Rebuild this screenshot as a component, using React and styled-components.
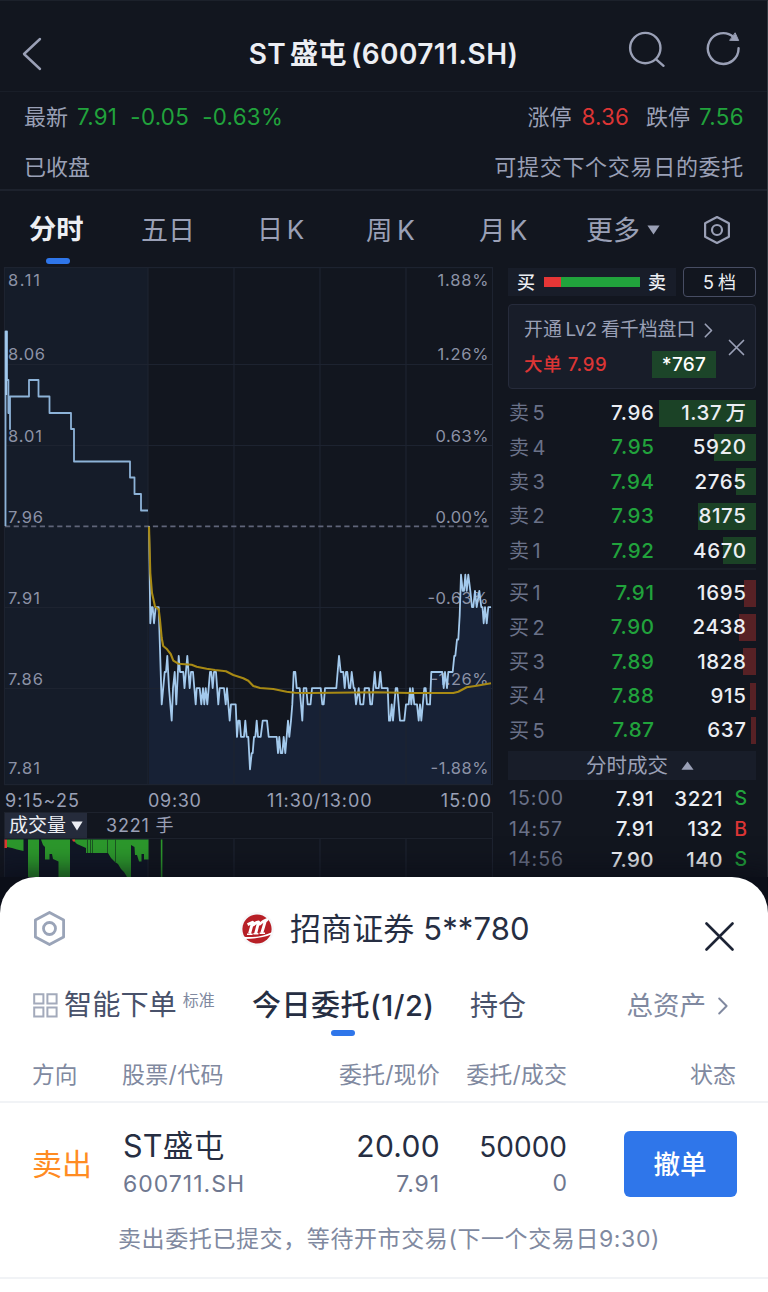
import React from "react";
import styled, { createGlobalStyle, css } from "styled-components";

const Global = createGlobalStyle`
  *, *::before, *::after { box-sizing: border-box; }
  body { margin: 0; background: #12161f; }
`;

const C = {
  bg: "#12161f",
  panel: "#181d29",
  line: "#1d222d",
  muted: "#9aa0b6",
  dim: "#6a7188",
  green: "#21a33c",
  red: "#dc3535",
  white: "#eceef3",
  ink: "#262e42",
  slate: "#8089a0",
  blue: "#2f76ea",
};

const type = css`
  font-size: ${(p) => p.$size}px;
  font-weight: ${(p) => p.$weight || 400};
  letter-spacing: ${(p) => p.$track || 0}px;
  word-spacing: ${(p) => p.$words || 0}px;
  color: ${(p) => p.$color || "inherit"};
  white-space: pre;
`;

const Screen = styled.div`
  width: 768px;
  height: 1292px;
  overflow: hidden;
  display: flex;
  flex-direction: column;
  background: ${C.bg};
  font-family: Inter, "Noto Sans CJK SC", sans-serif;
  line-height: 1;
`;

const Quotes = styled.div`
  height: 877px;
  flex: none;
  border-top: 1px solid #1c212b;
  border-right: 1px solid #343a42;
`;

const TopBar = styled.header`
  height: 91px;
  padding: 15px 26px 0 22px;
  display: grid;
  grid-template-columns: 120px 1fr 120px;
  align-items: center;
  border-bottom: 1px solid #191e28;
  color: ${C.muted};
`;

const Title = styled.h1`
  margin: 0 0 0 4px;
  text-align: center;
  ${type}
`;

const TopActions = styled.div`
  display: flex;
  gap: 40px;
  margin-top: -9px;
  margin-left: 7px;
`;

const Quote = styled.section`
  height: 99px;
  padding: 0 23px 0 24px;
  border-bottom: 2px solid ${C.line};
  color: ${C.muted};
`;

const QuoteLine = styled.div`
  height: 50px;
  display: flex;
  align-items: center;
  justify-content: space-between;
`;

const Figures = styled.div`
  display: flex;
  gap: ${(p) => p.$gap}px;
`;

const Label = styled.span`
  ${type}
`;

const PeriodTabs = styled.nav`
  height: 76px;
  display: flex;
  align-items: center;
  padding-left: 29px;
  color: ${C.muted};
`;

const PeriodTab = styled.div`
  width: ${(p) => p.$width}px;
  height: 76px;
  padding-top: 2px;
  display: flex;
  align-items: center;
  gap: 7px;
  position: relative;
`;

const Underline = styled.i`
  position: absolute;
  left: ${(p) => p.$left}px;
  bottom: ${(p) => p.$bottom}px;
  width: 24px;
  height: 6px;
  border-radius: 3px;
  background: ${C.blue};
`;

const HexSlot = styled.div`
  padding-top: 2px;
  display: flex;
`;

const Market = styled.main`
  height: 610px;
  display: flex;
`;

const ChartColumn = styled.section`
  width: 508px;
  height: 610px;
`;

const Axis = styled.div`
  height: 26px;
  width: 492px;
  padding: 3px 0 0 5px;
  display: grid;
  grid-template-columns: 143px 119px 1fr auto;
  align-items: center;
  color: ${C.muted};
`;

const VolumeHead = styled.div`
  height: 27px;
  width: 489px;
  margin-left: 4px;
  display: flex;
  align-items: center;
  border: 1px solid ${C.line};
  color: ${C.muted};
`;

const VolumePick = styled.div`
  width: 82px;
  height: 25px;
  margin-right: 19px;
  padding-left: 4px;
  display: flex;
  align-items: center;
  gap: 5px;
  background: #252b3b;
  color: ${C.white};
`;

const Book = styled.aside`
  width: 248px;
  display: flex;
  flex-direction: column;
  color: ${C.white};
`;

const BookHead = styled.div`
  height: 30px;
  display: flex;
  justify-content: space-between;
  align-items: center;
`;

const Ratio = styled.div`
  width: 168px;
  height: 28px;
  display: flex;
  align-items: center;
  justify-content: space-between;
  padding: 2px 10px 0 9px;
  background: ${C.panel};
`;

const RatioBar = styled.div`
  width: 96px;
  height: 10px;
  margin-top: -2px;
  background: linear-gradient(90deg, #e63636 17px, ${C.green} 17px);
`;

const DepthButton = styled.button`
  width: 73px;
  height: 30px;
  padding: 2px 0 0;
  border: 1.5px solid #474d63;
  border-radius: 4px;
  background: transparent;
  font-family: inherit;
  line-height: 1;
  ${type}
`;

const Promo = styled.div`
  height: 85px;
  margin-top: 7px;
  padding: 11px 10px 10px 15px;
  display: flex;
  justify-content: space-between;
  align-items: center;
  border: 1px solid #262b3b;
  border-radius: 4px;
  background: ${C.panel};
  color: ${C.muted};
`;

const PromoBody = styled.div`
  width: 192px;
  display: flex;
  flex-direction: column;
  gap: 7px;
`;

const PromoLine = styled.div`
  height: 27px;
  padding-right: ${(p) => p.$inset || 0}px;
  display: flex;
  align-items: center;
  justify-content: space-between;
`;

const Lots = styled.div`
  width: 64px;
  height: 27px;
  display: flex;
  align-items: center;
  justify-content: center;
  background: #1c4529;
  color: #fff;
`;

const Levels = styled.div`
  padding-top: ${(p) => p.$top}px;
  border-top: ${(p) => (p.$ruled ? "2px solid #191e28" : "0")};
`;

const Level = styled.div`
  height: 34.4px;
  padding: 0 9.5px 0 1px;
  display: grid;
  grid-template-columns: 45px 100.5px 1fr;
  align-items: center;
  position: relative;
  z-index: 0;
  & > span:not(:first-child) { text-align: right; }
`;

const DepthBar = styled.i`
  position: absolute;
  z-index: -1;
  right: 0;
  top: 3.7px;
  height: 27px;
  width: ${(p) => p.$width}px;
  background: ${(p) => p.$color};
`;

const TradesHead = styled.div`
  height: 29px;
  margin-top: 3px;
  padding: 1px 0 0 16px;
  display: flex;
  align-items: center;
  justify-content: center;
  gap: 13px;
  background: ${C.panel};
  color: ${C.muted};
`;

const Trades = styled.div`
  padding-top: 4px;
`;

const Trade = styled.div`
  height: 30.5px;
  padding: 0 9px 0 1px;
  display: grid;
  grid-template-columns: 65px 80px 69px 1fr;
  align-items: center;
  & > :nth-child(n + 2) { text-align: right; }
`;

const Sheet = styled.section`
  height: 415px;
  flex: none;
  position: relative;
  border-radius: 36px 36px 0 0;
  background: #fff;
  color: ${C.ink};
`;

const Backdrop = styled.div`
  background: #0b0e18;
  box-shadow: 0 -4px 22px 4px rgba(8, 10, 20, 0.6);
  position: relative;
`;

const SheetHead = styled.div`
  height: 105px;
  padding: 0 34px 2px 34px;
  display: grid;
  grid-template-columns: 206px 1fr 29px;
  align-items: center;
`;

const Broker = styled.div`
  display: flex;
  align-items: center;
  gap: 16px;
`;

const CloseWrap = styled.div`
  padding-top: 18px;
`;

const SheetTabs = styled.nav`
  height: 60px;
  padding: 0 40px 13px 33px;
  display: flex;
  align-items: center;
`;

const SheetTab = styled.div`
  display: flex;
  align-items: center;
  gap: ${(p) => p.$gap || 0}px;
  width: ${(p) => (p.$width ? p.$width + "px" : "auto")};
  height: 48px;
  position: relative;
`;

const Sup = styled.sup`
  align-self: flex-start;
  margin-top: 10px;
  line-height: 1;
  ${type}
`;

const Assets = styled.div`
  margin-left: auto;
  display: flex;
  align-items: center;
  gap: 12px;
  color: ${C.slate};
`;

const ColumnHead = styled.div`
  height: 61px;
  padding: 7px 32px 0;
  display: grid;
  grid-template-columns: 90px 217px 100px 128px 1fr;
  align-items: center;
  color: ${C.slate};
  border-bottom: 2px solid #f1f3f6;
  & > :nth-child(n + 3) { text-align: right; }
`;

const Order = styled.article`
  height: 176px;
  padding: 27px 31px 0 32px;
  border-bottom: 2px solid #f1f3f6;
`;

const OrderGrid = styled.div`
  display: grid;
  grid-template-columns: 91px 187px 130px 127px 1fr;
  align-items: center;
`;

const Pair = styled.div`
  height: 68px;
  display: flex;
  flex-direction: column;
  justify-content: space-between;
  padding: ${(p) => p.$pad || "1px 0 2px"};
  align-items: ${(p) => (p.$end ? "flex-end" : "flex-start")};
`;

const CancelButton = styled.button`
  justify-self: end;
  width: 113px;
  height: 66px;
  padding: 0 1px 4px 0;
  border: 0;
  border-radius: 6px;
  background: ${C.blue};
  font-family: inherit;
  ${type}
`;

const Note = styled.p`
  margin: 30px 0 0 86px;
  line-height: 1;
  ${type}
`;

const BackIcon = () => (
  <svg width="20" height="34" viewBox="0 0 20 34" fill="none" stroke="#9aa0b6" strokeWidth="2.4" strokeLinecap="round" strokeLinejoin="round">
    <path d="M18 2 2 17l16 15" />
  </svg>
);

const SearchIcon = () => (
  <svg width="40" height="38" viewBox="0 0 40 38" fill="none" stroke="#9aa0b6" strokeWidth="2.5" strokeLinecap="round">
    <circle cx="18" cy="18" r="15.8" />
    <path d="m29 29.5 8 7" />
  </svg>
);

const RefreshIcon = () => (
  <svg width="36" height="38" viewBox="0 0 36 38" fill="none" stroke="#9aa0b6" strokeWidth="2.5" strokeLinecap="round">
    <path d="M33.9 18.2A16 16 0 1 1 28.5 6.5" />
    <path d="M30.5 2.5 34 10.2 25 10Z" fill="#9aa0b6" strokeWidth="1" strokeLinejoin="round" />
  </svg>
);

const HexIcon = ({ width, height, color, stroke, hole }) => (
  <svg width={width} height={height} viewBox={`0 0 ${width} ${height}`} fill="none" stroke={color} strokeWidth={stroke} strokeLinejoin="round">
    <path
      d={`M${width / 2} ${stroke / 2} L${width - stroke / 2} ${height * 0.26} V${height * 0.74} L${width / 2} ${height - stroke / 2} L${stroke / 2} ${height * 0.74} V${height * 0.26} Z`}
    />
    <circle cx={width / 2} cy={height / 2} r={hole} />
  </svg>
);

const Triangle = ({ width, height, up, color }) => (
  <svg width={width} height={height} viewBox="0 0 12 10" preserveAspectRatio="none">
    <path d={up ? "M.4 9.6 6 .6l5.6 9Z" : "M.4.4h11.2L6 9.4Z"} fill={color} />
  </svg>
);

const Chevron = ({ width, height, color, stroke }) => (
  <svg width={width} height={height} viewBox="0 0 10 18" fill="none" stroke={color} strokeWidth={stroke} strokeLinecap="round" strokeLinejoin="round">
    <path d="m1.2 1.5 7.4 7.5-7.4 7.5" />
  </svg>
);

const Cross = ({ size, color, stroke }) => (
  <svg width={size} height={size} viewBox={`0 0 ${size} ${size}`} stroke={color} strokeWidth={stroke} strokeLinecap="round">
    <path d={`M1.5 1.5 ${size - 1.5} ${size - 1.5}M${size - 1.5} 1.5 1.5 ${size - 1.5}`} />
  </svg>
);

const GridIcon = () => (
  <svg width="25" height="25" viewBox="0 0 25 25" fill="none" stroke="#a3aabb" strokeWidth="2">
    <path d="M1.2 1.2h9.2v9.2H1.2zM14.4 1.2h9.2v9.2h-9.2zM1.2 14.4h9.2v9.2H1.2zM14.4 14.4h9.2v9.2h-9.2z" />
  </svg>
);

const BrokerLogo = () => (
  <svg width="34" height="34" viewBox="0 0 34 34">
    <circle cx="17" cy="17" r="17" fill="#f7f8fa" />
    <circle cx="17" cy="17" r="14.6" fill="#b71f26" />
    <g fill="none" stroke="#fff" strokeLinejoin="round">
      <path strokeWidth="2.9" d="M7.6 12.6 12.6 10.3 9.6 21.5M12.6 13.4Q16.2 9.8 18.6 10L15.7 21.3M18.8 12.8Q22.5 9 27 7.6L25.3 9.2 21.8 20.8" />
      <path strokeWidth="1.5" d="M7 22.2h5.6M13.4 21.8h5M19.6 21.3h5.4" />
    </g>
    <path fill="#fff" d="M3 24.8C13 25.7 22 24.6 32 20.2L31.2 22.6C23 25.6 15 26.9 4.6 27Z" />
  </svg>
);

const levelY = (cents) => 526 + (796 - cents) * 16.22;

// Pairs of horizontal position and price in cents for the trading session.
const session = [
  149, 796, 150.3, 790, 151.7, 791, 152.7, 791, 154, 790, 155.7, 791, 158.7, 791, 161.7, 785, 164.7, 787, 166, 787,
  167.3, 788, 169, 786, 171.7, 784, 173, 786, 174.7, 787, 176.3, 785, 178.7, 788, 180, 787, 183.3, 787, 184.5, 786,
  187.3, 788, 189.7, 786, 191, 787, 193, 787, 195.7, 785, 196.7, 786, 199.7, 786, 201.3, 785, 203, 786, 204.3, 785,
  205.7, 786, 207.3, 785, 210, 787, 211.3, 787, 212.7, 786, 214, 787, 216, 787, 218.3, 785, 219.7, 786, 224, 786,
  225.7, 785, 227, 786, 229.7, 784, 231, 785, 235.7, 785, 237, 783, 238.3, 784, 239.7, 784, 241, 783, 244, 783,
  245.3, 784, 246.7, 783, 248.3, 783, 250, 781, 251.7, 782, 252.7, 782, 254, 783, 255.3, 783, 256.7, 784, 258, 783,
  260.7, 783, 262.7, 784, 267, 784, 268.7, 783, 276.7, 783, 278, 782, 279.3, 783, 280.7, 782, 282.3, 782, 283.7, 783,
  285.3, 782, 288, 784, 289.3, 783, 291, 784, 292.3, 785, 293.7, 787, 295.3, 787, 296.7, 786, 299.7, 786, 302.3, 784,
  303.7, 786, 306.3, 786, 307.7, 785, 310.5, 785, 312, 786, 320.7, 786, 322.3, 785, 323.7, 785, 325, 786, 336.3, 786,
  339, 788, 340.7, 787, 343.3, 787, 344.7, 786, 346, 787, 347.3, 787, 349, 786, 350.3, 786, 351.7, 787, 353.7, 786,
  354.7, 786, 356, 785, 358.7, 786, 360.3, 785, 363.3, 785, 364.7, 786, 369, 786, 370.3, 785, 372, 785, 374.7, 787,
  376, 786, 378.7, 786, 380.3, 787, 381.7, 786, 387.7, 786, 389, 784, 390.3, 784, 391.7, 785, 393, 784, 395.7, 786,
  397.3, 786, 400, 784, 404.3, 784, 406, 785, 408.7, 785, 410, 786, 411.3, 785, 412.7, 786, 414.3, 785, 417, 785,
  418.7, 784, 420, 785, 421.3, 784, 424.3, 786, 425.7, 786, 427, 785, 430, 785, 431.3, 787, 442.3, 787, 443.7, 786,
  445, 787, 447, 786, 448.3, 787, 452.7, 787, 454.3, 788, 455.3, 788, 457, 789, 458.3, 789, 459.7, 790.5, 461, 793,
  462.7, 792, 464, 792, 465.3, 793, 466.7, 792, 468.3, 793, 470.3, 792, 472, 791, 473.3, 791, 475, 792, 476.7, 791,
  479.3, 792, 481.3, 791, 482.5, 791, 483.7, 790, 485, 791, 486.7, 790, 488.3, 791, 491, 791,
];

const sessionPath = session.reduce(
  (d, v, i) => (i % 2 ? `${d} ${levelY(v).toFixed(1)}` : `${d}${i ? "L" : ""}${v}`),
  "M"
);

const average =
  "M149 526.5 150.3 573 152 593 155 606.5 158.7 609.5 160 620 161.7 638 163.2 646 166.5 648.7 170.7 654 173.3 660.7 178.3 663.7 191.7 664.7 196.7 666.7 206.7 668.7 215 670 226 671.3 233.3 675 243.3 678.3 248.3 680.7 253.3 686 260 688 273.3 689 286.7 691.7 295 692.7 310 693 376.7 692.3 410 693 453.3 693 458.3 691.7 466.7 687.3 476.7 685.7 491 683.3";

const auction =
  "M5.5 526V331.5H7V380H8.4V413H10V429V396.5H29V380H38.5V396.5H49.5V413H71V429H74V461.5H130V477.5H134.5V494H141V510.5H148";

const priceMarks = [
  ["8.11", 286, 32], ["8.06", 360, 37], ["8.01", 441.5, 34], ["7.96", 522.5, 35],
  ["7.91", 603.5, 32], ["7.86", 684.5, 35], ["7.81", 774, 32],
];

const percentMarks = [
  ["1.88%", 286, 51], ["1.26%", 360, 51], ["0.63%", 441.5, 53], ["0.00%", 522.5, 53],
  ["-0.63%", 603.5, 61], ["-1.26%", 684.5, 58], ["-1.88%", 774, 58],
];

const ChartSvg = styled.svg`
  display: block;
  font-family: Inter, sans-serif;
  font-size: 16.5px;
`;

const PriceChart = () => (
  <ChartSvg width="508" height="519" viewBox="0 267 508 519">
    <rect x="5" y="268" width="143" height="517" fill="#151c29" />
    <path d={`${sessionPath}V785H149Z`} fill="#172135" />
    <g stroke="#1d2330" strokeWidth="1.2" fill="none">
      <rect x="4.5" y="267.6" width="488" height="517" />
      <path d="M148 268V785M234 268V785M320 268V785M406 268V785M5 364.5H492M5 445.5H492M5 607.5H492M5 688.5H492" />
    </g>
    <path d="M5 526.3H492" stroke="#5f6479" strokeWidth="1.7" strokeDasharray="5.2 3.5" />
    <g fill="#8c92a6">
      {priceMarks.map(([t, y, w]) => (
        <text key={t} x="8" y={y} textLength={w}>{t}</text>
      ))}
      {percentMarks.map(([t, y, w]) => (
        <text key={t} x={488.5 - w} y={y} textLength={w}>{t}</text>
      ))}
    </g>
    <g fill="none" stroke="#a3c9ec" strokeWidth="1.8" strokeLinejoin="round">
      <path d={auction} stroke="#8db3d8" />
      <path d="M6.2 331V395" strokeWidth="2" />
      <path d={sessionPath} />
    </g>
    <path d={average} fill="none" stroke="#a88a14" strokeWidth="2.1" strokeLinejoin="round" />
  </ChartSvg>
);

const VolumeChart = () => (
  <ChartSvg width="508" height="39" viewBox="0 838 508 39">
    <rect x="5" y="838" width="143" height="39" fill="#111726" />
    <path d="M148 838V877M234 838V877M320 838V877M406 838V877M492.5 838V877M4.5 838V877" stroke="#1d2330" strokeWidth="1.2" />
    <g fill="#2c972c">
      <path d="M7 838.5V846L12 847 17 848.5 23.5 850V838.5Z" />
      <path d="M28 838.5H39V877H28Z" />
      <path d="M41 838.5 43 844 45 846V858.5H49.5V853H52L53 858 58.5 860.5V877H70V838.5Z" />
      <path d="M72.5 838.5 77 843 86 847V852H108L111 857 115 861 118 863 121 868 124 871 126.5 875 127 877H131V838.5Z" />
      <path d="M131 838.5V844L134.5 846 135 854H137L139 860.5H141.5V853H144V858.5H148.5V838.5Z" />
      <path d="M160.8 838.5H162.4V877H160.8Z" />
    </g>
    <path d="M87.5 838.5V852M90.5 838.5V852M92.5 838.5V852M107.5 838.5V852M115.5 838.5V861" stroke="#16421f" strokeWidth=".8" />
    <path d="M4.5 838.5H7V847H4.5ZM72 838.5H75V840.5H73Z" fill="#d93a30" />
  </ChartSvg>
);

const sells = [
  ["卖 5", "7.96", "1.37 万", 97, C.white], ["卖 4", "7.95", "5920", 42], ["卖 3", "7.94", "2765", 20],
  ["卖 2", "7.93", "8175", 58], ["卖 1", "7.92", "4670", 33],
];
const buys = [
  ["买 1", "7.91", "1695", 12], ["买 2", "7.90", "2438", 17], ["买 3", "7.89", "1828", 13],
  ["买 4", "7.88", "915", 6], ["买 5", "7.87", "637", 5],
];
const trades = [
  ["15:00", "7.91", "3221", "S"], ["14:57", "7.91", "132", "B"], ["14:56", "7.90", "140", "S"],
];

const LevelRow = ({ row: [name, price, lots, width, tone], bar }) => (
  <Level>
    <Label $size={20} $words={-1.5} $track={-0.3} $color={C.dim}>{name}</Label>
    <Label $size={20.5} $weight={500} $track={0.6} $color={tone || C.green}>{price}</Label>
    <Label $size={20.5} $weight={500} $track={0.6} $words={-3}>{lots}</Label>
    <DepthBar $width={width} $color={bar} />
  </Level>
);

export default function App() {
  return (
    <Screen>
      <Global />
      <Quotes>
        <TopBar>
          <BackIcon />
          <Title $size={28} $weight={600} $track={0.4} $words={-3.5} $color={C.white}>ST 盛屯 (600711.SH)</Title>
          <TopActions>
            <SearchIcon />
            <RefreshIcon />
          </TopActions>
        </TopBar>

        <Quote>
          <QuoteLine>
            <Figures $gap={9}>
              <Label $size={22}>最新</Label>
              <Label $size={22.3} $track={0.3} $color={C.green}>7.91  -0.05  -0.63%</Label>
            </Figures>
            <Figures $gap={17}>
              <Figures $gap={10}>
                <Label $size={22}>涨停</Label>
                <Label $size={22.3} $track={0.2} $color={C.red}>8.36</Label>
              </Figures>
              <Figures $gap={9}>
                <Label $size={22}>跌停</Label>
                <Label $size={22.3} $track={0.4} $color={C.green}>7.56</Label>
              </Figures>
            </Figures>
          </QuoteLine>
          <QuoteLine>
            <Label $size={22}>已收盘</Label>
            <Label $size={22} $track={0.7}>可提交下个交易日的委托</Label>
          </QuoteLine>
        </Quote>

        <PeriodTabs>
          <PeriodTab $width={112}>
            <Label $size={27.3} $weight={600} $color={C.white}>分时</Label>
            <Underline $left={17} $bottom={3} />
          </PeriodTab>
          <PeriodTab $width={116}><Label $size={27}>五日</Label></PeriodTab>
          <PeriodTab $width={109}><Label $size={26} $words={-3.5}>日 K</Label></PeriodTab>
          <PeriodTab $width={113}><Label $size={26.5} $words={-3}>周 K</Label></PeriodTab>
          <PeriodTab $width={107}><Label $size={26.5} $words={-3.5}>月 K</Label></PeriodTab>
          <PeriodTab $width={118}>
            <Label $size={27}>更多</Label>
            <Triangle width={13} height={10} color={C.muted} />
          </PeriodTab>
          <HexSlot><HexIcon width={26} height={28} color={C.muted} stroke={2.2} hole={5} /></HexSlot>
        </PeriodTabs>

        <Market>
          <ChartColumn>
            <PriceChart />
            <Axis>
              <Label $size={18} $track={1}>9:15~25</Label>
              <Label $size={18} $track={0.7}>09:30</Label>
              <Label $size={18} $track={0.95}>11:30/13:00</Label>
              <Label $size={18} $track={1}>15:00</Label>
            </Axis>
            <VolumeHead>
              <VolumePick>
                <Label $size={19}>成交量</Label>
                <Triangle width={12} height={10} color={C.white} />
              </VolumePick>
              <Label $size={18} $track={0.8}>3221 手</Label>
            </VolumeHead>
            <VolumeChart />
          </ChartColumn>

          <Book>
            <BookHead>
              <Ratio>
                <Label $size={18} $weight={500}>买</Label>
                <RatioBar />
                <Label $size={18} $weight={500}>卖</Label>
              </Ratio>
              <DepthButton $size={18} $words={-1} $color={C.white}>5 档</DepthButton>
            </BookHead>
            <Promo>
              <PromoBody>
                <PromoLine $inset={3}>
                  <Label $size={18.9} $words={-1.5}>开通 Lv2 看千档盘口</Label>
                  <Chevron width={9} height={15} color={C.muted} stroke={2} />
                </PromoLine>
                <PromoLine>
                  <Label $size={18.5} $weight={500} $track={0.6} $color={C.red}>大单 7.99</Label>
                  <Lots><Label $size={19} $weight={500} $track={0.3}>*767</Label></Lots>
                </PromoLine>
              </PromoBody>
              <Cross size={17} color={C.muted} stroke={1.7} />
            </Promo>
            <Levels $top={7}>
              {sells.map((r) => <LevelRow key={r[0]} row={r} bar="#1b4226" />)}
            </Levels>
            <Levels $top={6} $ruled>
              {buys.map((r) => <LevelRow key={r[0]} row={r} bar="#572125" />)}
            </Levels>
            <TradesHead>
              <Label $size={20.5}>分时成交</Label>
              <Triangle width={13} height={9} up color={C.muted} />
            </TradesHead>
            <Trades>
              {trades.map(([time, price, lots, side]) => (
                <Trade key={time}>
                  <Label $size={19.5} $track={1} $color={C.dim}>{time}</Label>
                  <Label $size={20.5} $weight={500} $track={0.4}>{price}</Label>
                  <Label $size={20.5} $weight={500} $track={0.5}>{lots}</Label>
                  <Label $size={19.5} $weight={500} $color={side === "S" ? C.green : C.red}>{side}</Label>
                </Trade>
              ))}
            </Trades>
          </Book>
        </Market>
      </Quotes>

      <Backdrop>
        <Sheet>
          <SheetHead>
            <HexIcon width={31} height={35} color="#9aa4b8" stroke={2.8} hole={6} />
            <Broker>
              <BrokerLogo />
              <Label $size={31} $track={0.1}>招商证券 5**780</Label>
            </Broker>
            <CloseWrap><Cross size={29} color="#1d2435" stroke={2.6} /></CloseWrap>
          </SheetHead>
          <SheetTabs>
            <SheetTab $width={219} $gap={6}>
              <GridIcon />
              <Label $size={28.2} $color="#48516a">智能下单</Label>
              <Sup $size={16} $color={C.slate}>标准</Sup>
            </SheetTab>
            <SheetTab $width={218}>
              <Label $size={29} $weight={500} $track={0.5}>今日委托(1/2)</Label>
              <Underline $left={79} $bottom={-6} />
            </SheetTab>
            <SheetTab><Label $size={28} $color="#48516a">持仓</Label></SheetTab>
            <Assets>
              <Label $size={26.5}>总资产</Label>
              <Chevron width={10} height={18} color={C.slate} stroke={1.9} />
            </Assets>
          </SheetTabs>
          <ColumnHead>
            <Label $size={22.7}>方向</Label>
            <Label $size={23} $track={0.3}>股票/代码</Label>
            <Label $size={23} $track={0.1}>委托/现价</Label>
            <Label $size={23} $track={0.1}>委托/成交</Label>
            <Label $size={23}>状态</Label>
          </ColumnHead>
          <Order>
            <OrderGrid>
              <Label $size={30} $color="#ff8b22">卖出</Label>
              <Pair>
                <Label $size={30.5} $track={0.3}>ST盛屯</Label>
                <Label $size={23} $track={1} $color="#6f7890">600711.SH</Label>
              </Pair>
              <Pair $end>
                <Label $size={30} $track={0.3}>20.00</Label>
                <Label $size={23} $track={0.9} $color="#6f7890">7.91</Label>
              </Pair>
              <Pair $end $pad="3px 0 3px">
                <Label $size={28}>50000</Label>
                <Label $size={23} $color="#6f7890">0</Label>
              </Pair>
              <CancelButton $size={26.5} $weight={500} $color="#fff">撤单</CancelButton>
            </OrderGrid>
            <Note $size={23} $track={0.6} $color={C.slate}>卖出委托已提交，等待开市交易(下一个交易日9:30)</Note>
          </Order>
        </Sheet>
      </Backdrop>
    </Screen>
  );
}
